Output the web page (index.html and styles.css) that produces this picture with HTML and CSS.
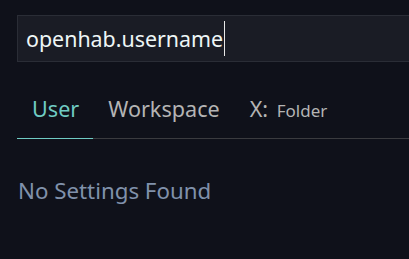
FILE: index.html
```html
<!DOCTYPE html>
<html lang="en">
<head>
    <meta charset="UTF-8">
    <title>Settings</title>
    <link rel="stylesheet" href="styles.css">
</head>
<body>
    <div class="search">
        <span class="query">openhab.username</span><span class="caret"></span>
    </div>
    <div class="tabs">
        <div class="tab active">User</div>
        <div class="tab">Workspace</div>
        <div class="tab">X: <span class="folder">Folder</span></div>
    </div>
    <p class="empty">No Settings Found</p>
</body>
</html>
```
FILE: styles.css
```css
body {
    margin: 0;
    background-color: #0f111a;
    font-family: "Noto Sans", sans-serif;
    overflow: hidden;
}
.search {
    margin: 15px 0 0 17px;
    height: 45px;
    border: 1px solid #2a2d36;
    border-right: none;
    background-color: #1a1c25;
    display: flex;
    align-items: center;
    padding-left: 8px;
    color: #eef6f6;
    font-size: 21.4px;
}
.caret {
    display: inline-block;
    width: 1px;
    height: 35px;
    background-color: #e8e8e8;
    margin-left: 1px;
}
.tabs {
    display: flex;
    margin: 33px 0 0 17px;
    border-bottom: 1px solid #3a3b3f;
}
.tab {
    height: 28px;
    padding: 0 15px 15px;
    line-height: 28px;
    font-size: 21.6px;
    color: #b4b4b4;
    margin-bottom: -1px;
    border-bottom: 1px solid transparent;
}
.tab.active {
    padding-right: 14px;
    color: #6fcbc3;
    border-bottom-color: #6fcbc3;
}
.folder {
    font-size: 17px;
    margin-left: 3px;
}
.empty {
    margin: 38px 0 0 18px;
    line-height: 28px;
    font-size: 22.3px;
    color: #8091ab;
}
```
